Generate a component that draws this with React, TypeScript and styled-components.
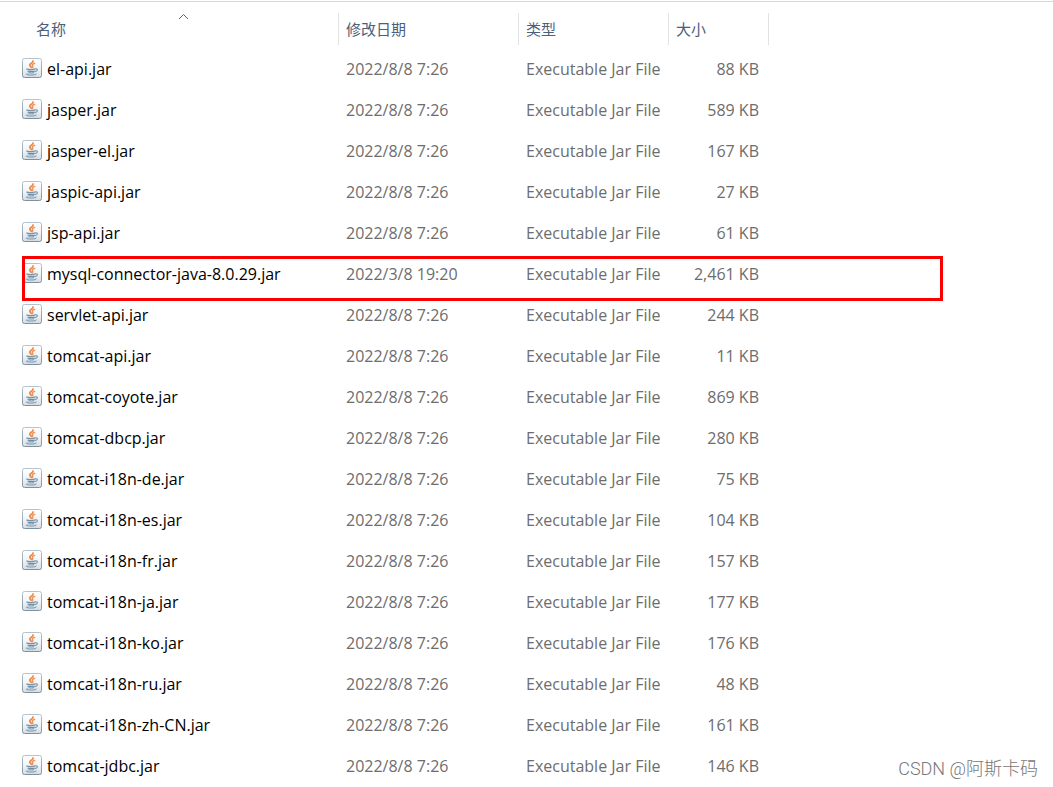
import React from 'react';
import styled, { createGlobalStyle } from 'styled-components';

const GlobalStyle = createGlobalStyle`
  body {
    margin: 0;
    background: #fff;
    font-family: 'Open Sans', 'Noto Sans CJK SC', sans-serif;
    font-size: 16px;
    line-height: 22px;
  }
`;

const Page = styled.main`
  position: relative;
  overflow: hidden;
`;

const FileTable = styled.table`
  width: 100%;
  table-layout: fixed;
  border-collapse: separate;
  border-spacing: 0;
`;

const Column = styled.col<{ $width?: number }>`
  width: ${({ $width }) => ($width ? `${$width}px` : 'auto')};
`;

const HeaderCell = styled.th`
  position: relative;
  height: 49px;
  padding: 0;
  text-align: left;
  vertical-align: top;
  box-sizing: border-box;
  border-top: 1px solid #fff;
  box-shadow: inset 0 1px #d5dad9;
`;

const HeaderButton = styled.button<{ $indent: number }>`
  display: block;
  width: 100%;
  height: 32px;
  margin: 12px 0 0;
  padding: 0 0 0 ${({ $indent }) => $indent}px;
  border: 0;
  border-right: 1px solid #e2e2e2;
  background: transparent;
  color: #4c607a;
  font: inherit;
  font-size: 15px;
  font-weight: 400;
  text-align: left;
`;

const SortArrow = styled.svg`
  position: absolute;
  top: 12px;
  left: 178px;
  width: 11px;
  height: 7px;
`;

const Row = styled.tr`
  position: relative;
`;

const Cell = styled.td<{ $align?: 'right' }>`
  height: 41px;
  box-sizing: border-box;
  padding: 9px 10px 0 7px;
  color: #6d6d6d;
  text-align: ${({ $align }) => $align ?? 'left'};
  vertical-align: top;
  white-space: nowrap;
`;

const NameCell = styled(Cell)`
  padding-left: 22px;
  color: #000;
`;

const FileName = styled.span`
  display: flex;
  align-items: flex-start;
  gap: 5px;
`;

const FileIcon = styled.svg`
  flex: none;
  width: 20px;
  height: 20px;
`;

const Marker = styled.span`
  position: absolute;
  top: 2px;
  right: 110px;
  bottom: -6px;
  left: 22px;
  border: 3px solid #fb0000;
  pointer-events: none;
`;

const Watermark = styled.div`
  position: absolute;
  right: 15px;
  bottom: 6px;
  color: #787878;
  font-family: Roboto, 'Noto Sans CJK SC', sans-serif;
  font-size: 18px;
  font-weight: 300;
  line-height: 24px;
`;

const JarIcon = () => (
  <FileIcon viewBox="0 0 20 20" aria-hidden="true">
    <defs>
      <linearGradient id="tile" x1="0" y1="0" x2="0" y2="1">
        <stop offset="0" stopColor="#ffffff" />
        <stop offset="0.55" stopColor="#f1f3f5" />
        <stop offset="1" stopColor="#d3dce3" />
      </linearGradient>
      <linearGradient id="edge" x1="0" y1="0" x2="0" y2="1">
        <stop offset="0" stopColor="#b4c3ce" />
        <stop offset="1" stopColor="#7f919f" />
      </linearGradient>
    </defs>
    <rect x="0.5" y="0.5" width="19" height="19" rx="2" fill="url(#tile)" stroke="url(#edge)" />
    <g fill="none" strokeLinecap="round">
      <path d="M11 3C11.6 5 7.6 5.2 7.8 7C7.9 8.1 9 8.4 9.2 9.4" stroke="#ee8a4a" strokeWidth="1.8" />
      <path d="M12.7 5.4C10.8 6 10 6.7 10.4 7.5C10.8 8.2 11.1 8.6 10.6 9.4" stroke="#ee935a" strokeWidth="1.5" />
      <path d="M4.8 11.2C6.8 11.7 10.5 11.7 12.6 11.2" stroke="#7391a9" strokeWidth="1.3" />
      <path d="M13.3 10.9C16.2 10.3 16.2 12.9 13 13.6" stroke="#7f9ab0" strokeWidth="1.2" />
      <path d="M6 13.1C8 13.5 10.7 13.5 12.2 13.1" stroke="#6a8aa4" strokeWidth="1.2" />
      <path d="M6.8 14.8C8.4 15.1 10.5 15.1 11.8 14.8" stroke="#6a8aa4" strokeWidth="1" />
      <path d="M5 15.7C2.8 16.4 6 17.1 9.3 17C12.5 17 14.8 16.5 14.4 15.8" stroke="#7391a9" strokeWidth="1" />
    </g>
  </FileIcon>
);

interface JarFile {
  name: string;
  size: string;
  date?: string;
  marked?: boolean;
}

const files: JarFile[] = [
  { name: 'el-api.jar', size: '88 KB' },
  { name: 'jasper.jar', size: '589 KB' },
  { name: 'jasper-el.jar', size: '167 KB' },
  { name: 'jaspic-api.jar', size: '27 KB' },
  { name: 'jsp-api.jar', size: '61 KB' },
  { name: 'mysql-connector-java-8.0.29.jar', size: '2,461 KB', date: '2022/3/8 19:20', marked: true },
  { name: 'servlet-api.jar', size: '244 KB' },
  { name: 'tomcat-api.jar', size: '11 KB' },
  { name: 'tomcat-coyote.jar', size: '869 KB' },
  { name: 'tomcat-dbcp.jar', size: '280 KB' },
  { name: 'tomcat-i18n-de.jar', size: '75 KB' },
  { name: 'tomcat-i18n-es.jar', size: '104 KB' },
  { name: 'tomcat-i18n-fr.jar', size: '157 KB' },
  { name: 'tomcat-i18n-ja.jar', size: '177 KB' },
  { name: 'tomcat-i18n-ko.jar', size: '176 KB' },
  { name: 'tomcat-i18n-ru.jar', size: '48 KB' },
  { name: 'tomcat-i18n-zh-CN.jar', size: '161 KB' },
  { name: 'tomcat-jdbc.jar', size: '146 KB' },
];

const FileRow = ({ name, size, date = '2022/8/8 7:26', marked }: JarFile) => (
  <Row>
    <NameCell>
      <FileName>
        <JarIcon />
        {name}
      </FileName>
      {marked && <Marker />}
    </NameCell>
    <Cell>{date}</Cell>
    <Cell>Executable Jar File</Cell>
    <Cell $align="right">{size}</Cell>
    <Cell />
  </Row>
);

export default function App() {
  return (
    <Page>
      <GlobalStyle />
      <FileTable>
        <colgroup>
          <Column $width={339} />
          <Column $width={180} />
          <Column $width={150} />
          <Column $width={100} />
          <Column />
        </colgroup>
        <thead>
          <tr>
            <HeaderCell scope="col" aria-sort="ascending">
              <HeaderButton type="button" $indent={36}>名称</HeaderButton>
              <SortArrow viewBox="0 0 11 7" aria-hidden="true">
                <path d="M1 6L5.5 1.5L10 6" fill="none" stroke="#606060" />
              </SortArrow>
            </HeaderCell>
            <HeaderCell scope="col">
              <HeaderButton type="button" $indent={7}>修改日期</HeaderButton>
            </HeaderCell>
            <HeaderCell scope="col">
              <HeaderButton type="button" $indent={7}>类型</HeaderButton>
            </HeaderCell>
            <HeaderCell scope="col">
              <HeaderButton type="button" $indent={7}>大小</HeaderButton>
            </HeaderCell>
            <HeaderCell as="td" />
          </tr>
        </thead>
        <tbody>
          {files.map((file) => (
            <FileRow key={file.name} {...file} />
          ))}
        </tbody>
      </FileTable>
      <Watermark>CSDN @阿斯卡码</Watermark>
    </Page>
  );
}
